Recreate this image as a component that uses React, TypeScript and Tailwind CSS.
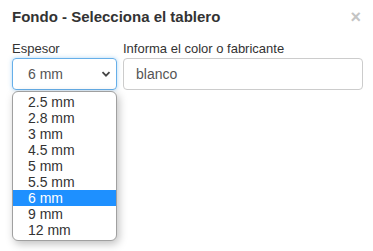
import React from 'react';

const options = ['2.5 mm', '2.8 mm', '3 mm', '4.5 mm', '5 mm', '5.5 mm', '6 mm', '9 mm', '12 mm'];

export default function App() {
  const selected = '6 mm';

  return (
    <div className="w-[373px] h-[251px] bg-white overflow-hidden text-[#333] font-['Liberation_Sans',Arial,sans-serif]">
      <div className="flex items-center justify-between pl-3 pr-[12px] pt-[7px]">
        <h4 className="text-[15px] font-bold leading-[20px]">Fondo - Selecciona el tablero</h4>
        <span className="text-[18px] font-bold leading-none text-[#c4c4c4]">×</span>
      </div>

      <div className="flex gap-[6px] pl-3 pr-[10px] pt-[13px]">
        <div className="relative w-[105px] flex flex-col">
          <label className="text-[13px] leading-[18px]">Espesor</label>
          <div className="h-[32px] flex items-center justify-between rounded-[4px] border border-[#66afe9] pl-[15px] pr-[5px] text-[14px] text-[#555] shadow-[0_0_4px_rgba(102,175,233,0.5)]">
            <span>{selected}</span>
            <svg width="10" height="10" viewBox="0 0 10 10" fill="none">
              <path d="M1.5 3.2 L5 6.7 L8.5 3.2" stroke="#444" strokeWidth="1.8" />
            </svg>
          </div>
          <ul className="absolute left-0 top-[51px] w-[105px] py-[2px] bg-white border border-[#a0a0a0] rounded-[6px] shadow-[2px_3px_8px_rgba(0,0,0,0.25)] text-[14px] leading-[16px] text-[#333]">
            {options.map(o => (
              <li
                key={o}
                className={o === selected ? 'pl-[15px] h-[16px] bg-[#1e90ff] text-white' : 'pl-[15px] h-[16px]'}
              >
                {o}
              </li>
            ))}
          </ul>
        </div>

        <div className="flex-1 flex flex-col">
          <label className="text-[13px] leading-[18px]">Informa el color o fabricante</label>
          <div className="h-[32px] flex items-center rounded-[4px] border border-[#ccc] pl-[12px] text-[14px] text-[#555]">
            blanco
          </div>
        </div>
      </div>
    </div>
  );
}
